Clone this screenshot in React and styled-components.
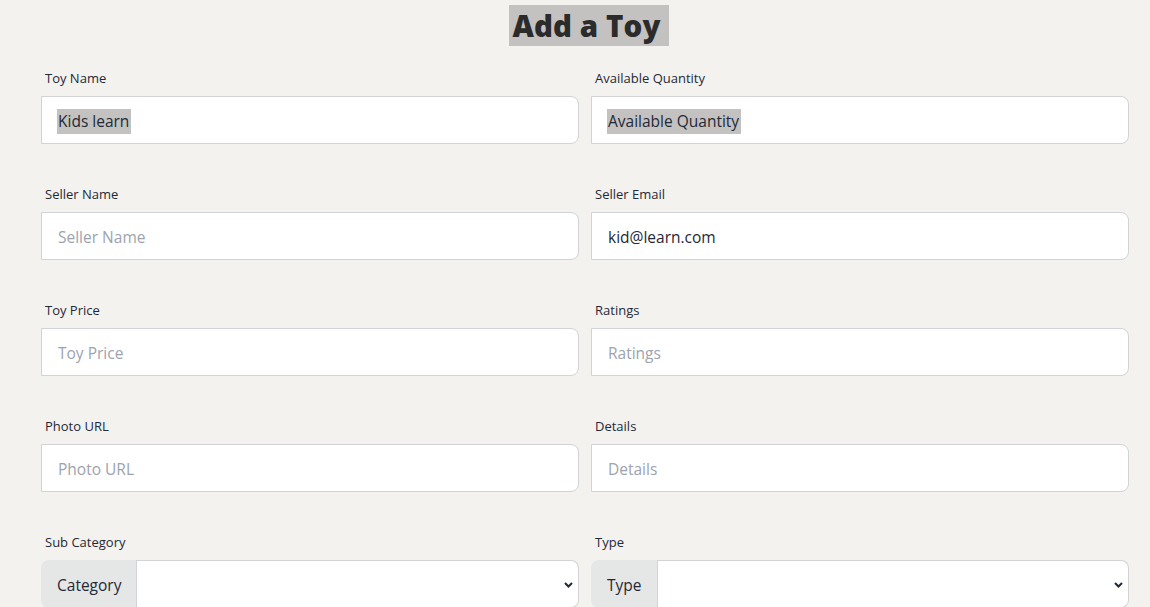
import React from "react";
import styled, { createGlobalStyle } from "styled-components";

const Global = createGlobalStyle`
  html, body { margin: 0; padding: 0; background: #f3f2ef; }
  body { font-family: "Open Sans", "Noto Sans", sans-serif; color: #1f2937; overflow: hidden; }
  * { box-sizing: border-box; }
`;

const Page = styled.div`
  padding: 0 21px 0 41px;
  height: 607px;
  overflow: hidden;
`;

const Title = styled.h2`
  margin: 7px 0 15px;
  padding-left: 8px;
  text-align: center;
  font-size: 29.5px;
  line-height: 38px;
  font-weight: 800;
  color: #2b2b2b;
  letter-spacing: 0.1px;
`;

const Highlight = styled.span`
  background: #c3c2c0;
  padding: ${(p) => p.$pad || "0"};
`;

const Grid = styled.form`
  display: grid;
  grid-template-columns: 1fr 1fr;
  column-gap: 12px;
  row-gap: 32px;
`;

const Field = styled.div`
  display: flex;
  flex-direction: column;
`;

const Label = styled.label`
  padding: 8px 4px;
  font-size: 13px;
  line-height: 20px;
  color: #1f2937;
`;

const Input = styled.input`
  height: 48px;
  width: 100%;
  border: 1px solid #d1d3d6;
  border-radius: 0 8px 8px 0;
  background: #ffffff;
  padding: 2px 16px 0;
  font-family: inherit;
  font-size: 15.5px;
  color: #1f2937;
  outline: none;
  &::placeholder { color: #9ca3af; }
`;

const FakeInput = styled.div`
  height: 48px;
  width: 100%;
  border: 1px solid #d1d3d6;
  border-radius: 0 8px 8px 0;
  background: #ffffff;
  padding: 2px 16px 0 15px;
  font-size: 15.5px;
  display: flex;
  align-items: center;
  color: #1f2937;
`;

const Group = styled.div`
  display: flex;
  height: 48px;
`;

const Addon = styled.span`
  display: flex;
  align-items: center;
  padding: 2px 15px 0 16px;
  background: #e5e6e6;
  border-radius: 8px 0 0 8px;
  font-size: 15.5px;
  color: #1f2937;
  border-right: 1px solid #d1d3d6;
`;

const SelectWrap = styled.div`
  position: relative;
  flex: 1;
`;

const Select = styled.select`
  appearance: none;
  width: 100%;
  height: 48px;
  border: 1px solid #d1d3d6;
  border-left: none;
  border-radius: 0 8px 8px 0;
  background: #ffffff;
  font-family: inherit;
  font-size: 15.5px;
  outline: none;
`;

const Chevron = styled.svg`
  position: absolute;
  right: 6px;
  top: 22px;
  width: 9px;
  height: 6px;
  pointer-events: none;
`;

const textFields = [
  { label: "Toy Name", value: "Kids learn", selected: true },
  { label: "Available Quantity", value: "Available Quantity", selected: true },
  { label: "Seller Name", placeholder: "Seller Name" },
  { label: "Seller Email", value: "kid@learn.com" },
  { label: "Toy Price", placeholder: "Toy Price" },
  { label: "Ratings", placeholder: "Ratings" },
  { label: "Photo URL", placeholder: "Photo URL" },
  { label: "Details", placeholder: "Details" },
];

const selects = [
  { label: "Sub Category", addon: "Category" },
  { label: "Type", addon: "Type" },
];

export default function App() {
  return (
    <>
      <Global />
      <Page>
        <Title>
          <Highlight $pad="0 8px 0 3px">Add a Toy</Highlight>
        </Title>
        <Grid>
          {textFields.map((f) => (
            <Field key={f.label}>
              <Label>{f.label}</Label>
              {f.selected ? (
                <FakeInput>
                  <Highlight $pad="1px 2px 2px 1px">{f.value}</Highlight>
                </FakeInput>
              ) : (
                <Input
                  placeholder={f.placeholder}
                  defaultValue={f.value}
                  readOnly
                />
              )}
            </Field>
          ))}
          {selects.map((s) => (
            <Field key={s.label}>
              <Label>{s.label}</Label>
              <Group>
                <Addon>{s.addon}</Addon>
                <SelectWrap>
                  <Select defaultValue="">
                    <option value=""></option>
                  </Select>
                  <Chevron viewBox="0 0 9 6">
                    <path d="M1 1 L4.5 4.5 L8 1" fill="none" stroke="#1f2937" strokeWidth="2" />
                  </Chevron>
                </SelectWrap>
              </Group>
            </Field>
          ))}
        </Grid>
      </Page>
    </>
  );
}
